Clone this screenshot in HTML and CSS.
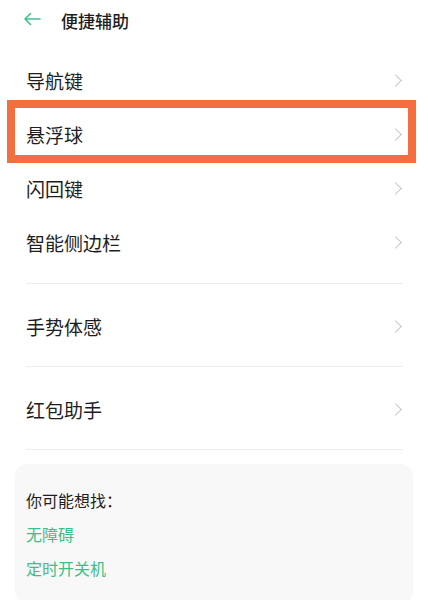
FILE: index.html
```html
<!DOCTYPE html>
<html lang="zh-CN">
  <head>
    <meta charset="UTF-8" />
    <meta name="viewport" content="width=device-width, initial-scale=1.0" />
    <title>便捷辅助</title>
    <link rel="stylesheet" href="styles.css">
  </head>
  <body>
    <div class="page">
      <div class="header">
        <svg class="back" width="18" height="14" viewBox="0 0 18 14">
          <path d="M17 7H2M7.5 1.5L2 7l5.5 5.5" fill="none" stroke="#3fc28c" stroke-width="1.6" stroke-linecap="round" stroke-linejoin="round" />
        </svg>
        <span class="title">便捷辅助</span>
      </div>

      <div class="group first">
        <div class="row"><span>导航键</span><i class="chevron"></i></div>
        <div class="row"><span>悬浮球</span><i class="chevron"></i></div>
        <div class="row"><span>闪回键</span><i class="chevron"></i></div>
        <div class="row"><span>智能侧边栏</span><i class="chevron"></i></div>
      </div>
      <div class="group">
        <div class="row"><span>手势体感</span><i class="chevron"></i></div>
      </div>
      <div class="group">
        <div class="row"><span>红包助手</span><i class="chevron"></i></div>
      </div>

      <div class="card">
        <div class="card-title">你可能想找：</div>
        <div class="link">无障碍</div>
        <div class="link">定时开关机</div>
      </div>

      <div class="highlight"></div>
    </div>
  </body>
</html>
```

FILE: styles.css
```css
body {
  margin: 0;
  background: #fff;
  font-family: "Noto Sans CJK SC", "Noto Sans", sans-serif;
  color: #222;
}
.page {
  position: relative;
  height: 600px;
  overflow: hidden;
}
.header {
  height: 40px;
  display: flex;
  align-items: center;
  padding-left: 23px;
  margin-bottom: 13px;
}
.back {
  display: block;
  margin-top: -2px;
}
.title {
  margin-left: 20px;
  font-size: 17px;
  font-weight: 500;
  color: #1e1e1e;
}
.group {
  margin: 0 25px 0 26px;
  padding: 15px 0 13px;
  border-bottom: 1px solid #ececec;
}
.group.first {
  padding-top: 0;
  padding-bottom: 14px;
}
.row {
  height: 54px;
  display: flex;
  align-items: center;
  justify-content: space-between;
  font-size: 19px;
  color: #1e1e1e;
}
.chevron {
  width: 8px;
  height: 8px;
  border-top: 1.2px solid #c4c4c4;
  border-right: 1.2px solid #c4c4c4;
  transform: rotate(45deg);
  margin-right: 3px;
}
.card {
  margin: 14px 15px 0;
  padding: 24px 11px 14px;
  background: #f8f8f8;
  border-radius: 12px;
  font-size: 16px;
}
.card-title {
  height: 24px;
  line-height: 24px;
  margin-bottom: 10px;
  color: #1e1e1e;
}
.link {
  height: 24px;
  line-height: 24px;
  margin-bottom: 10px;
  color: #3dbe88;
}
.highlight {
  position: absolute;
  top: 100px;
  left: 7px;
  width: 393px;
  height: 47px;
  border: 8px solid #f46f3f;
}
```
